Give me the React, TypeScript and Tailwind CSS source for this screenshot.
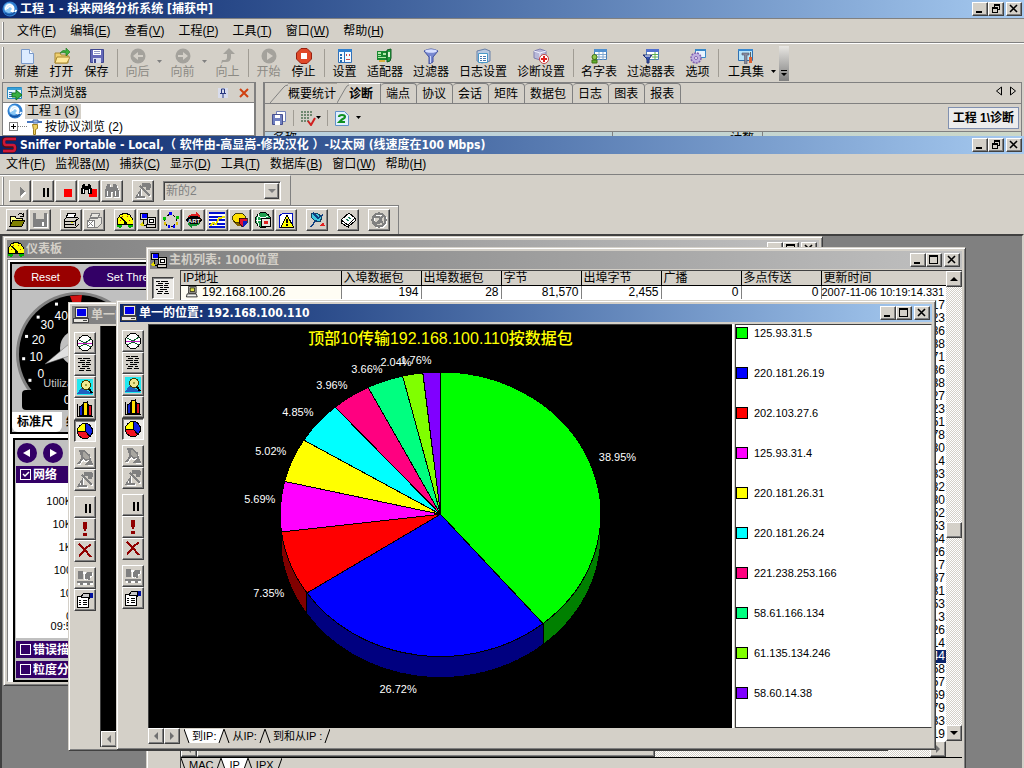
import React from "react";

const RAISED =
  "border border-t-white border-l-white border-r-[#404040] border-b-[#404040] shadow-[inset_-1px_-1px_0_#808080] bg-[#d4d0c8]";
const PRESSED =
  "border border-t-[#404040] border-l-[#404040] border-r-white border-b-white shadow-[inset_1px_1px_0_#808080] bg-[#eceae6]";
const DITHER = "bg-[repeating-conic-gradient(#ffffff_0_25%,#d4d0c8_0_50%)] bg-[length:2px_2px]";

const ICONS: Record<string, React.ReactNode> = {
  swirl: (
    <>
      <circle cx="8" cy="8" r="7.5" fill="#2f7fd0" />
      <circle cx="7" cy="7" r="5" fill="#8cc8f4" />
      <path d="M4 9a4 4 0 1 1 7 1M5.500 8a2.500 2.500 0 1 1 4 2q3 2 5-1" fill="none" stroke="#fff" strokeWidth="1.600" />
      <path d="M3 12q5 4 10-1" fill="none" stroke="#1450a0" strokeWidth="1.500" />
    </>
  ),
  newdoc: (
    <>
      <path d="M2.500 1.500h8l4 4v10h-12z" fill="#dcebff" stroke="#7898c8" />
      <path d="M10.500 1.500v4h4" fill="#fff" stroke="#7898c8" />
    </>
  ),
  opendoc: (
    <>
      <path d="M1 5h5l1 2h7v8H1z" fill="#f0d070" stroke="#a88830" />
      <path d="M3 9h13l-3 6H1z" fill="#ffe898" stroke="#a88830" />
      <path d="M6 5q3-4 6-2V0l4 4-4 4V5Q9 4 6 5z" fill="#3cb03c" stroke="#187018" strokeWidth=".6" />
    </>
  ),
  save: (
    <>
      <path d="M1.500 1.500h13v13h-13z" fill="#6468b8" stroke="#404890" />
      <path d="M4 2h8v5H4z" fill="#fff" />
      <path d="M5 3.500h6M5 5.500h6" stroke="#9098c8" />
      <path d="M4 10h8v5H4z" fill="#d8dcf0" />
      <path d="M5 11h2v4H5z" fill="#404890" />
    </>
  ),
  back: (
    <>
      <circle cx="8" cy="8" r="7.500" fill="#a4a29c" />
      <path d="M3 8l5-4v3h5v2H8v3z" fill="#d4d0c8" />
    </>
  ),
  forward: (
    <>
      <circle cx="8" cy="8" r="7.500" fill="#a4a29c" />
      <path d="M13 8L8 4v3H3v2h5v3z" fill="#d4d0c8" />
    </>
  ),
  up: <path d="M9 0l6 6h-4v3q0 5-5 5H3l-2 2 1-4h3q2 0 2-3V6H3z" fill="#a4a29c" />,
  play: (
    <>
      <circle cx="8" cy="8" r="7.500" fill="#a4a29c" />
      <path d="M6 4l6 4-6 4z" fill="#d4d0c8" />
    </>
  ),
  stop: (
    <>
      <path d="M5 .5h6l4.500 4.500v6L11 15.500H5L.5 11V5z" fill="#e04828" stroke="#982010" />
      <path d="M5 5h6v6H5z" fill="#fff" />
    </>
  ),
  settings: (
    <>
      <path d="M1.500 1.500h13v13h-13z" fill="#f4faff" stroke="#3070b8" />
      <path d="M1 1h14v3H1z" fill="#3080d0" />
      <path d="M3 6h2v2H3zM3 9h2v2H3zM3 12h2v2H3z" fill="#2068b0" />
      <path d="M7.500 4v11" stroke="#3070b8" />
      <path d="M9 6h1v2H9zM12 6h1v2h-1zM9 11h4v1H9z" fill="#d04848" />
    </>
  ),
  adapter: (
    <>
      <path d="M0 3h10v9H0z" fill="#188830" />
      <path d="M1 4h3v2H1zM1 7h3v1H1zM6 5h3v2H6zM1 9h8v1H1z" fill="#b0e8a8" />
      <path d="M10 2l4-1v9q0 4-4 4z" fill="#20a040" stroke="#105820" />
      <path d="M2 12h6v2H2z" fill="#d8b040" />
      <path d="M11 4h2v5h-2z" fill="#d8f0d0" />
    </>
  ),
  funnel: (
    <>
      <path d="M1 3q7-4 14 0L10 9v5l-4 2V9z" fill="#7888d0" stroke="#4050a0" />
      <ellipse cx="8" cy="3" rx="6" ry="1.800" fill="#d8e0ff" />
      <path d="M7.500 8v7" stroke="#d0d8f8" />
    </>
  ),
  logset: (
    <>
      <path d="M2 3l8-2 5 2v10l-8 2-5-2z" fill="#b8c8e0" stroke="#6880a8" />
      <path d="M3.500 5.500h9v9h-9z" fill="#fff" stroke="#4898c8" />
      <path d="M5 8.500h2M8 8.500h3M5 10.500h2M8 10.500h3M5 12.500h2M8 12.500h3" stroke="#4878b0" />
    </>
  ),
  diagset: (
    <>
      <path d="M1 3l6-2 6 2v7l-6 2-6-2z" fill="#b8b8d8" stroke="#8080b0" />
      <path d="M1 3l6 2 6-2M7 5v7" stroke="#f0f0ff" fill="none" />
      <circle cx="11" cy="11" r="4.500" fill="#fff" stroke="#c04040" />
      <path d="M11 8v6M8 11h6" stroke="#e02020" strokeWidth="2" />
    </>
  ),
  nametable: (
    <>
      <path d="M3.500 1.500h12v10h-12z" fill="#fff" stroke="#4880b8" />
      <path d="M3 1h13v3H3z" fill="#5090d0" />
      <path d="M4 6.500h11M4 9h11M8 4v8M12 4v8" stroke="#80a8d0" />
      <circle cx="3.500" cy="9" r="2.500" fill="#90c850" stroke="#407010" />
      <path d="M1 12h5v3H1z" fill="#60b030" stroke="#407010" />
    </>
  ),
  filtertable: (
    <>
      <path d="M3.500 1.500h12v10h-12z" fill="#fff" stroke="#4880b8" />
      <path d="M3 1h13v3H3z" fill="#5070d0" />
      <path d="M9 6.500h6M9 9h6M12 4v8" stroke="#60b050" />
      <path d="M0 7h9L6 11v4H4v-4z" fill="#3050b0" stroke="#203070" />
      <path d="M2 8h5" stroke="#fff" />
    </>
  ),
  options: (
    <>
      <path d="M5.500 1.500h10v8h-10z" fill="#e8f4ff" stroke="#3888c8" />
      <path d="M5 1h11v2H5z" fill="#3888c8" />
      <circle cx="6" cy="10" r="5" fill="#c0b0e0" stroke="#8060b0" strokeDasharray="2 1" strokeWidth="1.500" />
      <circle cx="6" cy="10" r="1.500" fill="#fff" stroke="#8060b0" />
    </>
  ),
  toolset: (
    <>
      <path d="M.5 1.500h14v11H.5z" fill="#b8e4fa" stroke="#3070b0" />
      <path d="M0 1h15v2H0z" fill="#3888d0" />
      <path d="M4 5h7v2H9v9H6.500V7H4z" fill="#888ca0" stroke="#505468" strokeWidth=".6" />
      <path d="M12 4h1v5h-1z" fill="#606060" />
      <path d="M11 9h3v6h-3z" fill="#e06030" />
    </>
  ),
  node: (
    <>
      <path d="M.5 2.500h14v11H.5z" fill="#e8f8ff" stroke="#2888c0" />
      <path d="M1 3h14v2H1z" fill="#38a0d8" />
      <path d="M2 7.500h3M2 9.500h3M2 11.500h3" stroke="#3070b0" />
      <path d="M5 8h4V5l6 5-6 5v-3H5z" fill="#38b040" stroke="#107020" />
    </>
  ),
  protocol: (
    <>
      <path d="M0 3h15" stroke="#4878c0" strokeWidth="2" />
      <path d="M6 1h5v3H6z" fill="#98b8e8" stroke="#4868a8" />
      <path d="M5.500 5.500h5v4l-2 1v5h-2v-5z" fill="#f0d060" stroke="#a08020" />
    </>
  ),
  savecopy: (
    <>
      <path d="M5.500 1.500h9v10h-9z" fill="#fff" stroke="#7080b8" />
      <path d="M1.500 4.500h10v10h-10z" fill="#7080c0" stroke="#485090" />
      <path d="M4 5h5v3H4zM4 11h5v4H4z" fill="#fff" />
    </>
  ),
  listcheck: (
    <>
      <path d="M1 2h12M1 5h12M1 8h8M1 11h8" stroke="#708870" strokeWidth="2" strokeDasharray="2 1" />
      <path d="M8 11l3 4 4-7" fill="none" stroke="#d02020" strokeWidth="2" />
    </>
  ),
  refresh: (
    <>
      <path d="M1.500 1.500h9l4 4v10h-13z" fill="#e0f0ff" stroke="#6090c8" />
      <path d="M5 7q0-2 3-2t3 2q0 1-3 2.500L5.500 12H11" fill="none" stroke="#109020" strokeWidth="2.200" />
    </>
  ),
  logoS: (
    <>
      <path d="M14 2H4Q1 2 1 5t3 4h7q2 0 2 2t-2 3H1" fill="none" stroke="#501018" strokeWidth="4" />
      <path d="M14 2H4Q2 2 2 5t2 3h7q2 0 2 3t-2 3H1" fill="none" stroke="#d01838" strokeWidth="2.500" />
    </>
  ),
  sPlay: (
    <>
      <path d="M9 5l5 5-5 5z" fill="#fff" />
      <path d="M8 4l5 4.500L8 13z" fill="#808080" />
    </>
  ),
  sPause: <path d="M8 5h2v9H8zM12 5h2v9h-2z" fill="#000" />,
  sStop: <path d="M6 6h8v8H6z" fill="#f00" />,
  sFind: (
    <>
      <path d="M8 6h8v8H8z" fill="#f00" />
      <path d="M3 0h2v2h3V0h2l2 5v5H8V6H5v4H1V5z" fill="#000" transform="translate(-1 1)" />
      <path d="M2 6h1v4H2zM8 6h1v4H8z" fill="#fff" />
    </>
  ),
  sFindGrey: (
    <>
      <path d="M4 2h3v3h3V2h3l3 7v6h-6v-5H8v5H2V9z" fill="#fff" />
      <path d="M3 1h3v3h3V1h3l3 7v6H9V9H7v5H1V8z" fill="#808080" />
      <path d="M3 8h1v5H3zM11 8h1v5h-1z" fill="#fff" />
    </>
  ),
  wand: (
    <>
      <path d="M6 4l10 10M6 15V9l-3 5M2 15h9" stroke="#fff" strokeWidth="2" fill="none" />
      <path d="M5 3l10 10" stroke="#808080" strokeWidth="2.500" />
      <path d="M5 14V8l-4 6h9M8 1h2v2H8zM12 0h2v2h-2zM12 4h2v2h-2zM15 2h1v2h-1z" stroke="#808080" strokeWidth="1.200" fill="none" />
    </>
  ),
  folder: (
    <>
      <path d="M1 4h5l1 2h6v2h3l-3 6H1z" fill="#ffff90" stroke="#000" />
      <path d="M1 14l3-6h12l-3 6z" fill="#808000" stroke="#000" />
      <path d="M9 3q3-3 5 0m0-2v3h-3" fill="none" stroke="#000" />
    </>
  ),
  disk: (
    <>
      <path d="M2 2h14v14H2z" fill="#fff" />
      <path d="M1 1h14v14H1z" fill="#808080" />
      <path d="M4 1h8v6H4z" fill="#d4d0c8" />
      <path d="M10 10h2v4h-2z" fill="#fff" />
    </>
  ),
  printer: (
    <>
      <path d="M5 1h8l-2 5H3z" fill="#fff" stroke="#000" />
      <path d="M1 8l3-3h10l2 2v5l-3 3H1z" fill="#d4d0c8" stroke="#000" />
      <path d="M1 9h11l3-2M12 9v5M2 12h9" fill="none" stroke="#000" />
      <path d="M8 10h2v1H8z" fill="#e8e800" />
    </>
  ),
  printerGrey: (
    <>
      <path d="M6 1h8l-2 5H4zM3 8l3-3h9v7l-3 3H3z" fill="#e8e6e0" stroke="#808080" />
      <path d="M1 8h7v7H1z" fill="#fff" stroke="#808080" />
      <path d="M2 9l5 5M7 9l-5 5" stroke="#808080" />
    </>
  ),
  gauge: (
    <>
      <path d="M0 12V8l3-5 5-2 5 2 3 5v4z" fill="#ff0" stroke="#000" />
      <path d="M3 8h1v1H3zM5 4h1v1H5zM10 4h1v1h-1zM12 8h1v1h-1z" fill="#c02020" />
      <path d="M4 5l5 6" stroke="#000" strokeWidth="1.500" />
      <path d="M7 10h3v2H7z" fill="#000" />
      <path d="M0 14h5M3 12.500v3M11 14h5M13 12.500v3" stroke="#00b000" strokeWidth="1.500" />
    </>
  ),
  hosts: (
    <>
      <path d="M.5 1.500h7v6h-7z" fill="#d4d0c8" stroke="#000" />
      <path d="M2 2h5v4H2z" fill="#00f" />
      <path d="M3.500 8v5h4" fill="none" stroke="#000" />
      <path d="M7.500 5.500h8v7h-8z" fill="#e8e6e0" stroke="#000" />
      <path d="M9.500 7.500h4v3h-4z" fill="#fff" stroke="#000" />
      <path d="M6.500 12.500h9v3h-9z" fill="#d4d0c8" stroke="#000" />
      <path d="M0 12l3-2 1 4H1z" fill="#e0d800" />
    </>
  ),
  matrix: (
    <>
      <path d="M7.500 1.500l6 4 .5 5-4 4H5l-3.500-4 .5-5z" fill="none" stroke="#000" strokeDasharray="2 1" />
      <path d="M6 0h3v3H6zM5 13h2v3H5zM10 13h2v3h-2z" fill="#00f" />
      <path d="M0 5h3v3H0zM13 4h3v3h-3z" fill="#00c000" />
      <path d="M1 10h2v3H1zM13 10h2v3h-2z" fill="#e0c000" />
    </>
  ),
  art: (
    <>
      <path d="M1 8Q2 1 10 2V0l5 4-5 4V5Q4 4 3 9z" fill="#e02020" />
      <path d="M15 8q-1 7-9 6v2l-5-4 5-4v3q6 1 7-4z" fill="#109030" />
      <ellipse cx="8" cy="8" rx="8" ry="4" fill="#000" />
      <text x="8" y="10.500" fontSize="6" fontWeight="700" textAnchor="middle" fill="#fff">ART</text>
    </>
  ),
  history: (
    <>
      <path d="M0 0h16v16H0z" fill="#fff" />
      <path d="M0 0h16v2H0zM0 4h16v2H0zM0 7h16v2H0zM0 11h16v2H0zM0 14h16v2H0z" fill="#0010d0" />
      <path d="M1 14l3-3 3 1 3-6 6-1" fill="none" stroke="#e8e000" strokeWidth="2" />
    </>
  ),
  piehist: (
    <>
      <path d="M1 5v4q3 6 9 5l2-4z" fill="#806000" />
      <ellipse cx="7" cy="6" rx="7" ry="5" fill="#ffe000" stroke="#000" strokeWidth=".7" />
      <path d="M7 6h8v5l-5 4-3-5z" fill="#e01030" stroke="#000" strokeWidth=".7" />
      <path d="M11 9h4v3l-4 3z" fill="#1020c0" />
    </>
  ),
  globe: (
    <>
      <circle cx="8" cy="8" r="7.500" fill="#20a050" stroke="#000" />
      <path d="M1 8h14M3 4q5 3 10 0M4 2q-3 6 0 12" stroke="#fff" fill="none" />
      <path d="M6.500 6.500h9v8h-9z" fill="#e8e6e0" stroke="#000" />
      <path d="M9 9h4v3H9z" fill="#e02020" />
    </>
  ),
  alarm: (
    <>
      <path d="M1 4l5-3h8v14H1z" fill="#fff" stroke="#0010c0" />
      <path d="M9 3l6.500 12H3z" fill="#ff0" stroke="#000" />
      <path d="M8 7h2v4H8zM8 12h2v2H8z" fill="#000" />
    </>
  ),
  capture: (
    <>
      <path d="M2 2l6-1 5 4-2 5-5-1-4-4z" fill="#40c8e0" stroke="#104060" />
      <path d="M7 8l-5 7M4 1l5 5 5-3" stroke="#104080" strokeWidth="1.500" fill="none" />
      <path d="M10 14h6l-2-4z" fill="#e02020" />
    </>
  ),
  book: (
    <>
      <path d="M1 8l8-7 6 5v3l-7 6-7-4z" fill="#fff" stroke="#000" />
      <path d="M1 8l7 5 7-7M8 13v3" fill="none" stroke="#000" />
      <path d="M6 7l3 2M8 5l3 2" stroke="#208060" />
    </>
  ),
  deny: (
    <>
      <circle cx="9" cy="9" r="6.500" fill="none" stroke="#fff" strokeWidth="2" />
      <circle cx="8" cy="8" r="6.500" fill="none" stroke="#808080" strokeWidth="2.500" />
      <path d="M3 5h5l2 3-2 3H4l-1-2M12 4l-8 9M8 8l4 3" stroke="#808080" strokeWidth="2" fill="none" />
    </>
  ),
  pc: (
    <>
      <path d="M2.500 .5h12v10h-12z" fill="#e8e6e0" stroke="#404040" />
      <path d="M4 2h9v7H4z" fill="#0000e8" />
      <path d="M.5 11.500h15v4H.5z" fill="#e8e6e0" stroke="#404040" />
      <path d="M10 13.500h4" stroke="#404040" />
    </>
  ),
  pcsmall: (
    <>
      <path d="M3.500 .5h10v9h-10z" fill="#d4d0c8" stroke="#000" />
      <path d="M5.500 2.500h6v5h-6z" fill="#e0e040" stroke="#000" />
      <path d="M1.500 10.500h12l1.500 4H.5z" fill="#f4f4f0" stroke="#000" />
    </>
  ),
  ball: (
    <>
      <circle cx="8" cy="8" r="7.500" fill="#fff" stroke="#000" />
      <path d="M1 8.500h14" stroke="#c020c0" />
      <path d="M2 5l6 3 6-4M2 12l6-3 6 3" stroke="#106030" fill="none" />
    </>
  ),
  lines: (
    <path
      d="M1 1.500h4M6 1.500h7M3 3.500h5M10 3.500h4M1 5.500h7M9 5.500h4M5 7.500h3M9 7.500h5M1 9.500h2M5 9.500h7M3 11.500h5M10 11.500h3M2 13.500h5M9 13.500h5"
      stroke="#000"
    />
  ),
  zoomer: (
    <>
      <path d="M0 0h16v16H0z" fill="#20e8f0" />
      <path d="M0 15l5-7 11 7z" fill="#2060c0" />
      <circle cx="9" cy="6" r="4.500" fill="#f0e890" stroke="#404000" />
      <path d="M12 10l3 4" stroke="#000" strokeWidth="2" />
      <circle cx="9" cy="6" r="1.500" fill="#a0a040" />
    </>
  ),
  bars: (
    <>
      <path d="M2.500 14V6l3-2v10z" fill="#1020d0" stroke="#000" />
      <path d="M6.500 14V2l4-1v13z" fill="#ffe000" stroke="#000" />
      <path d="M11.500 14V4l3 1v9z" fill="#e01020" stroke="#000" />
      <path d="M.5 3v12h15" fill="none" stroke="#000" />
    </>
  ),
  pie: (
    <>
      <circle cx="8" cy="8" r="7.500" fill="#ff0" stroke="#000" />
      <path d="M8 8V.5A7.500 7.500 0 0 1 13 13.500z" fill="#1020e0" stroke="#000" />
      <path d="M8 8l5 5.500A7.500 7.500 0 0 1 .5 9z" fill="#f01020" stroke="#000" />
    </>
  ),
  runner: (
    <>
      <path d="M4 3l5 1 4 4-2 4-5-2-4 5M11 15h5" stroke="#fff" strokeWidth="2" fill="none" />
      <path d="M3 1h4l5 4 1 4-4 1-4-3z" stroke="#808080" strokeWidth="1.500" fill="#a8a6a0" />
      <path d="M6 8l-5 6M10 14h5l-2-3zM5 2v5" stroke="#808080" strokeWidth="2" fill="#808080" />
    </>
  ),
  bang: <path d="M6 1h4v5L9 10H7L6 6zM6 12h4v3H6z" fill="#900000" />,
  cross: <path d="M2 1l5 5 7 8M14 2q-4 1-7 6-2 3-5 5" fill="none" stroke="#900000" strokeWidth="2" />,
  export: (
    <>
      <path d="M2 3h6v7M10 10l6-6M1 14h15" stroke="#fff" strokeWidth="2" fill="none" />
      <path d="M1 1h5v8H1zM8 9V4l3-2h4v4h-2v4zM0 11h16v2H0z" fill="#808080" />
      <path d="M3 14h3M10 14h3" stroke="#808080" strokeWidth="2" />
    </>
  ),
  props: (
    <>
      <path d="M.5 4.500h11v11H.5z" fill="#fff" stroke="#000" />
      <path d="M2 8.500h2M6 8.500h4M2 10.500h2M6 10.500h4M2 12.500h2M6 12.500h4" stroke="#000" />
      <path d="M4 5l3-4h5v5z" fill="#c8c8c8" stroke="#000" />
      <path d="M13 1h3v5h-3z" fill="#0010a0" />
    </>
  ),
};

function Icon({ name, className = "size-4", crisp = false }: { name: string; className?: string; crisp?: boolean }) {
  return (
    <svg viewBox="0 0 16 16" className={`${className} shrink-0`} aria-hidden="true" shapeRendering={crisp ? "crispEdges" : "auto"}>
      {ICONS[name]}
    </svg>
  );
}

function CaptionButtons({ restore = false }: { restore?: boolean }) {
  const base = `flex h-[14px] w-4 items-center justify-center ${RAISED}`;
  return (
    <div className="ml-auto flex shrink-0 pr-[2px]">
      <button className={base} aria-label="最小化">
        <svg viewBox="0 0 12 10" className="h-[10px] w-3"><path d="M2 7h6v2H2z" /></svg>
      </button>
      <button className={base} aria-label={restore ? "还原" : "最大化"}>
        <svg viewBox="0 0 12 10" className="h-[10px] w-3" shapeRendering="crispEdges">
          {restore ? (
            <path d="M4 0h6v6H8V5h1V2H5v1H4zM2 3h6v6H2zM3 5v3h4V5z" fillRule="evenodd" />
          ) : (
            <path d="M1 0h9v9H1zM2 2v6h7V2z" fillRule="evenodd" />
          )}
        </svg>
      </button>
      <button className={`ml-[2px] ${base}`} aria-label="关闭">
        <svg viewBox="0 0 12 10" className="h-[10px] w-3"><path d="M2 1l7 7M9 1L2 8" stroke="#000" strokeWidth="1.600" /></svg>
      </button>
    </div>
  );
}

function AppTitle({ icon, children }: { icon: string; children: React.ReactNode }) {
  return (
    <header className="flex h-[18px] shrink-0 items-center gap-[2px] bg-linear-to-r from-[#0a246a] to-[#a6caf0] pl-[2px]">
      <Icon name={icon} />
      <h1 className="truncate font-[DejaVu_Sans_Condensed,Noto_Sans_CJK_SC,sans-serif] text-[12px] leading-[18px] font-bold text-white">
        {children}
      </h1>
      <CaptionButtons restore />
    </header>
  );
}

function Menu({ items, className }: { items: [string, string][]; className: string }) {
  return (
    <nav className={className}>
      {items.map(([label, key]) => (
        <button key={key} className="whitespace-nowrap">
          {label}(<u>{key}</u>)
        </button>
      ))}
    </nav>
  );
}

type Tool = { t: string; icon: string; w: string; off?: boolean; drop?: boolean } | null;
const MAIN_TOOLS: Tool[] = [
  { t: "新建", icon: "newdoc", w: "w-[35px]" },
  { t: "打开", icon: "opendoc", w: "w-[35px]" },
  { t: "保存", icon: "save", w: "w-[35px]" },
  null,
  { t: "向后", icon: "back", w: "w-[35px]", off: true, drop: true },
  { t: "向前", icon: "forward", w: "w-[35px]", off: true, drop: true },
  { t: "向上", icon: "up", w: "w-[35px]", off: true },
  null,
  { t: "开始", icon: "play", w: "w-[35px]", off: true },
  { t: "停止", icon: "stop", w: "w-[35px]" },
  null,
  { t: "设置", icon: "settings", w: "w-[35px]" },
  { t: "适配器", icon: "adapter", w: "w-[46px]" },
  { t: "过滤器", icon: "funnel", w: "w-[46px]" },
  { t: "日志设置", icon: "logset", w: "w-[58px]" },
  { t: "诊断设置", icon: "diagset", w: "w-[58px]" },
  null,
  { t: "名字表", icon: "nametable", w: "w-[46px]" },
  { t: "过滤器表", icon: "filtertable", w: "w-[58px]" },
  { t: "选项", icon: "options", w: "w-[35px]" },
  null,
  { t: "工具集", icon: "toolset", w: "w-[50px]", drop: true },
];

function Caret({ grey = false }: { grey?: boolean }) {
  return (
    <svg viewBox="0 0 5 3" className="h-[3px] w-[5px] shrink-0" aria-hidden="true">
      <path d="M0 0h5L2.500 3z" fill={grey ? "#808080" : "#000"} />
    </svg>
  );
}

function Grip({ className }: { className: string }) {
  return <span className={`w-[2px] shrink-0 border-r border-l border-r-[#808080] border-l-white ${className}`} />;
}

function AnalyzerApp() {
  const tabs = ["端点", "协议", "会话", "矩阵", "数据包", "日志", "图表", "报表"];
  return (
    <section className="flex h-[136px] shrink-0 flex-col overflow-hidden">
      <AppTitle icon="swirl">工程 1 - 科来网络分析系统 [捕获中]</AppTitle>
      <div className="flex h-[25px] shrink-0 items-center border-t border-b border-t-[#808080] border-b-[#808080] pl-[2px]">
        <Grip className="h-[18px]" />
        <Menu
          className="flex gap-[14px] pl-[13px]"
          items={[["文件", "F"], ["编辑", "E"], ["查看", "V"], ["工程", "P"], ["工具", "T"], ["窗口", "W"], ["帮助", "H"]]}
        />
      </div>
      <div className="flex h-[39px] shrink-0 items-center border-t border-t-white pl-[2px]">
        <Grip className="mr-[5px] h-8" />
        {MAIN_TOOLS.map((tool, i) =>
          tool === null ? (
            <span key={i} className="flex w-[6px] justify-center"><span className="h-7 w-px bg-[#a09c94]" /></span>
          ) : (
            <div key={i} className="flex shrink-0 items-center">
              <button disabled={tool.off} className={`flex flex-col items-center gap-[1px] whitespace-nowrap disabled:text-[#8c8a84] ${tool.w}`}>
                <Icon name={tool.icon} />
                <span className="leading-[14px]">{tool.t}</span>
              </button>
              {tool.drop && (
                <button aria-label={`${tool.t}选项`} disabled={tool.off} className={tool.off ? "flex w-[10px] pb-1 pl-[2px]" : "flex w-2 pt-4"}>
                  <Caret grey={tool.off} />
                </button>
              )}
            </div>
          ),
        )}
        <button aria-label="更多按钮" className="flex h-[35px] w-[10px] items-end justify-center bg-linear-to-b from-[#e8e6e2] to-[#808080] pb-1">
          <svg viewBox="0 0 6 7" className="h-[7px] w-[6px]"><path d="M0 0h6v1H0zM0 3h6L3 6z" /></svg>
        </button>
      </div>
      <div className="flex min-h-0 flex-1">
        <aside className="ml-[2px] flex w-[254px] shrink-0 flex-col border border-r-2 border-[#808080]">
          <div className="flex h-[20px] shrink-0 items-center gap-1 border-b border-[#808080] pr-[5px] pl-1">
            <Icon name="node" />
            <h2 className="flex-1">节点浏览器</h2>
            <button aria-label="固定" className="mr-[7px] bg-[#d8dcec]">
              <svg viewBox="0 0 10 10" className="size-[10px]"><path d="M2 5.500h6M3.500 5V1h3v4M5 6v4" stroke="#283880" fill="none" /></svg>
            </button>
            <button aria-label="关闭面板">
              <svg viewBox="0 0 10 10" className="size-[10px]"><path d="M1 1l8 8M9 1L1 9" stroke="#d04010" strokeWidth="2" /></svg>
            </button>
          </div>
          <div className="flex flex-1 flex-col bg-white pl-1">
            <div className="flex h-4 shrink-0 items-center gap-[2px]">
              <Icon name="swirl" />
              <span className="bg-[#d4d0c8] px-[2px] leading-[15px]">工程 1 (3)</span>
            </div>
            <div className="flex h-4 shrink-0 items-center">
              <svg viewBox="0 0 18 10" className="ml-[2px] h-[10px] w-[18px]" shapeRendering="crispEdges">
                <path d="M.5.500h8v8h-8z" fill="#fff" stroke="#808080" />
                <path d="M2 4.500h5M4.500 2v5" stroke="#000" />
                <path d="M9 4.500h9" stroke="#808080" strokeDasharray="1 1" />
              </svg>
              <Icon name="protocol" />
              <span className="pl-[2px]">按协议浏览 (2)</span>
            </div>
          </div>
        </aside>
        <div className="mr-[2px] ml-[7px] flex min-w-0 flex-1 flex-col border-t border-r border-l-2 border-[#808080]">
          <div className="flex h-[21px] shrink-0 items-stretch border-b border-[#808080]">
            <svg viewBox="0 0 18 20" className="ml-[5px] h-5 w-[18px]"><path d="M0 20L13 5q2-3 5-3" stroke="#808080" fill="none" /></svg>
            <button className="border-t border-[#a8a49c] pr-[1px]">概要统计</button>
            <svg viewBox="0 0 12 20" className="h-5 w-3"><path d="M0 20L8 6q2-4 4-4" stroke="#808080" fill="none" /></svg>
            <button className="border-t border-r border-[#808080] border-t-white pr-[7px] font-bold">诊断</button>
            {tabs.map((t) => (
              <button key={t} className="rounded-t-[4px] border-t border-r border-[#808080] pr-[6px] pl-[5px]">{t}</button>
            ))}
            <div className="ml-auto flex items-center gap-2 pr-[5px] pb-1">
              <button aria-label="向左滚动"><svg viewBox="0 0 6 10" className="h-[10px] w-[6px]"><path d="M5.500 1v8l-5-4z" fill="none" stroke="#000" /></svg></button>
              <button aria-label="向右滚动"><svg viewBox="0 0 6 10" className="h-[10px] w-[6px]"><path d="M.5 1v8l5-4z" fill="none" stroke="#000" /></svg></button>
            </div>
          </div>
          <div className="flex h-[27px] shrink-0 items-center pl-[6px]">
            <button aria-label="保存结果"><Icon name="savecopy" /></button>
            <span className="mx-[6px] h-4 w-px bg-[#a09c94]" />
            <button aria-label="筛选" className="flex items-center"><Icon name="listcheck" /><Caret /></button>
            <span className="mx-[6px] h-4 w-px bg-[#a09c94]" />
            <button aria-label="刷新" className="flex items-center gap-[6px]"><Icon name="refresh" /><Caret /></button>
            <strong className="mr-[2px] ml-auto border border-[#8090b0] bg-[#ececec] px-1 leading-5">工程 1\诊断</strong>
          </div>
          <div className="flex h-[6px] overflow-hidden border-t border-[#808080] bg-linear-to-r from-[#b8d0e0] to-[#ccd8c8] leading-[12px]">
            <span className="w-[348px] border-r border-[#808080] pl-2">名称</span>
            <span className="w-[150px] border-r border-[#808080] pr-2 text-right">计数</span>
          </div>
        </div>
      </div>
    </section>
  );
}

function ToolButton({ icon, label, pressed = false, disabled = false }: { icon: string; label: string; pressed?: boolean; disabled?: boolean }) {
  return (
    <button
      aria-label={label}
      aria-pressed={pressed}
      disabled={disabled}
      className={`flex size-[22px] shrink-0 items-center justify-center ${pressed ? PRESSED : RAISED}`}
    >
      <Icon name={icon} crisp />
    </button>
  );
}

const FILE_TOOLS: [string, string][][] = [
  [["folder", "打开"], ["disk", "保存"]],
  [["printer", "打印"], ["printerGrey", "取消打印"]],
  [["gauge", "仪表板"], ["hosts", "主机列表"], ["matrix", "矩阵"], ["art", "响应时间"], ["history", "历史"], ["piehist", "协议分布"], ["globe", "全局统计"], ["alarm", "警报"]],
  [["capture", "捕获面板"]],
  [["book", "地址簿"]],
  [["deny", "停止"]],
];

const SIDE_TOOLS: [string, string][][] = [
  [["ball", "流量图"], ["lines", "大纲"], ["zoomer", "详细"], ["bars", "柱形图"], ["pie", "饼图"]],
  [["runner", "捕获"], ["wand", "定义过滤器"]],
  [["sPause", "暂停"], ["bang", "刷新"], ["cross", "重置"]],
  [["export", "导出"], ["props", "属性"]],
];

function Win({ title, icon, active = false, place, children }: { title: string; icon: string; active?: boolean; place: string; children: React.ReactNode }) {
  return (
    <article
      className={`absolute flex flex-col border border-[#d4d0c8] border-r-[#404040] border-b-[#404040] bg-[#d4d0c8] p-[3px] shadow-[inset_1px_1px_0_#fff,inset_-1px_-1px_0_#808080] ${place}`}
    >
      <header
        className={`flex h-[18px] shrink-0 items-center gap-[2px] bg-linear-to-r pl-[1px] ${
          active ? "from-[#0a246a] to-[#a6caf0] text-white" : "from-[#808080] to-[#c0c0c0] text-[#d4d0c8]"
        }`}
      >
        <Icon name={icon} crisp />
        <h2 className="truncate font-[DejaVu_Sans_Condensed,Noto_Sans_CJK_SC,sans-serif] text-[12px] leading-[18px] font-bold">{title}</h2>
        <CaptionButtons />
      </header>
      {children}
    </article>
  );
}

function Dial() {
  const cx = 66;
  const cy = 64;
  const ticks = [0, 10, 20, 30, 40, 50, 60, 70, 80, 90, 100];
  return (
    <svg viewBox="0 0 132 122" className="h-[122px] w-[132px] shrink-0 font-[Liberation_Sans,sans-serif]">
      <circle cx={cx} cy={cy} r="62" fill="#808080" />
      <circle cx={cx} cy={cy} r="59" fill="#000" />
      <path d="M0 102h132v20H0z" fill="#c0c0c0" />
      {ticks.map((t) => {
        const a = ((-118 + t * 2.36) * Math.PI) / 180;
        const x = cx + Math.sin(a) * 55;
        const y = cy - Math.cos(a) * 55;
        return (
          <g key={t}>
            <rect x={x - 1} y={y - 1} width="3" height="3" fill="#fff" />
            <text x={cx + Math.sin(a) * 42} y={cy - Math.cos(a) * 42 + 4} fontSize="12" textAnchor="middle" fill="#fff">{t}</text>
          </g>
        );
      })}
      <path d="M58 6l12-1-1 8-8 1z" fill="#d01010" />
      <circle cx={cx} cy={cy - 6} r="18" fill="#c0c0c0" />
      <path d="M33 74l24-20 6 10z" fill="#e0e0e0" stroke="#606060" strokeWidth=".5" />
      <text x="60" y="97" fontSize="11" textAnchor="middle" fill="#c8c8c8">Utilization%</text>
      <rect x="10" y="100" width="112" height="20" rx="4" fill="#000" />
      <text x="55" y="114" fontSize="12" textAnchor="middle" fill="#fff">0</text>
    </svg>
  );
}

function Check({ label, checked = false }: { label: string; checked?: boolean }) {
  return (
    <label className="flex h-[17px] shrink-0 items-center gap-[2px] bg-[#330066] pl-1 text-[12px] font-bold text-white">
      <span className="relative flex size-[11px] shrink-0">
        <input type="checkbox" defaultChecked={checked} className="size-[11px] appearance-none border border-white" />
        {checked && (
          <svg viewBox="0 0 11 11" className="pointer-events-none absolute inset-0 size-[11px]"><path d="M3 5l2 2 4-4" fill="none" stroke="#fff" strokeWidth="1.500" /></svg>
        )}
      </span>
      {label}
    </label>
  );
}

function Dashboard() {
  return (
    <Win title="仪表板" icon="gauge" place="top-0 left-[1px] h-[450px] w-[820px]">
      <div className="mt-[1px] flex min-h-0 flex-1 flex-col gap-1 border border-[#808080] border-r-white border-b-white bg-white p-[2px]">
        <div className="flex flex-col border-2 border-black bg-[#c0c0c0]">
          <div className="flex h-[26px] shrink-0 items-center gap-[2px] border-b border-black pl-[2px] text-[11px] text-white">
            <button className="h-[21px] w-[67px] rounded-full bg-[#990000] pr-1">Reset</button>
            <button className="h-[21px] w-[130px] rounded-full bg-[#330066]">Set Thresholds...</button>
          </div>
          <Dial />
          <div className="flex h-5 shrink-0 items-stretch">
            <button className="w-[50px] rounded-b-[6px] bg-white pr-1 font-bold">标准尺</button>
            <button className="px-1 font-bold">细节</button>
          </div>
        </div>
        <div className="ml-[3px] flex flex-1 flex-col border-2 border-black bg-[#c0c0c0] pl-[1px]">
          <div className="flex h-[26px] shrink-0 items-center gap-[6px] pl-[1px]">
            <button aria-label="上一个" className="flex size-5 items-center justify-center rounded-full bg-[#330066]">
              <svg viewBox="0 0 8 8" className="size-2"><path d="M7 0v8L0 4z" fill="#fff" /></svg>
            </button>
            <button aria-label="下一个" className="flex size-5 items-center justify-center rounded-full bg-[#330066]">
              <svg viewBox="0 0 8 8" className="size-2"><path d="M1 0v8l7-4z" fill="#fff" /></svg>
            </button>
          </div>
          <Check label="网络" checked />
          <div className="flex flex-1 flex-col bg-white pt-[7px]">
            <ul className="w-14 text-right text-[11px] leading-[23px]">
              {["100K", "10K", "1K", "100", "10", "0"].map((v) => <li key={v}>{v}</li>)}
              <li className="-mt-[13px]">09:5</li>
            </ul>
          </div>
          <div className="flex flex-col gap-[3px] pt-[3px] pb-[2px]">
            <Check label="错误描述" />
            <Check label="粒度分布" />
          </div>
        </div>
      </div>
    </Win>
  );
}

const HOST_HEAD = ["入埠数据包", "出埠数据包", "字节", "出埠字节", "广播", "多点传送"];
const ROW_ENDS = [
  "317", "323", "336", "338", "371", "336", "338", "327", "323", "351", "378", "330", "1.4", "333", "332", "330", "352",
  "353", "354", "326", "3.7", "337", "331", "353", "5.3", "326", "314", "344", "358", "357", "369", "379", "333", "319",
];

function ScrollButton({ dir }: { dir: "up" | "down" | "left" | "right" }) {
  const paths = { up: "M0 6l4-4 4 4z", down: "M0 2l4 4 4-4z", left: "M6 0v8L2 4z", right: "M2 0v8l4-4z" };
  return (
    <button aria-label={`scroll ${dir}`} className={`flex size-4 shrink-0 items-center justify-center ${RAISED}`}>
      <svg viewBox="0 0 8 8" className="size-2">
        <path d={paths[dir]} fill={dir === "left" || dir === "right" ? "#707070" : "#000"} />
      </svg>
    </button>
  );
}

function SheetTabs({ items, active }: { items: string[]; active: number }) {
  return (
    <div className="flex h-[14px] text-[11px]">
      {items.map((t, i) => (
        <button key={t} className="flex items-stretch">
          <svg viewBox="0 0 7 14" className="h-[14px] w-[7px]">
            <path d="M0 0h7v14H5z" fill={i === active ? "#fff" : "#d4d0c8"} />
            <path d="M0 0l5 14" stroke="#000" fill="none" />
          </svg>
          <span className={`px-[1px] leading-[14px] ${i === active ? "bg-white" : ""}`}>{t}</span>
          <svg viewBox="0 0 7 14" className="h-[14px] w-[7px]">
            <path d="M0 0h7L2 14H0z" fill={i === active ? "#fff" : "#d4d0c8"} />
            <path d="M7 0L2 14" stroke="#000" fill="none" />
          </svg>
        </button>
      ))}
    </div>
  );
}

function HostTable() {
  const th = "h-[14px] truncate border-r border-b border-black bg-[#d4d0c8] pl-[2px] text-left font-normal";
  const td = "truncate border-r border-[#808080] pr-[2px] text-right";
  return (
    <Win title="主机列表: 1000位置" icon="hosts" place="top-[11px] left-[144px] h-[540px] w-[820px]">
      <div className="mt-[1px] flex min-h-0 flex-1">
        <div className="w-[30px] shrink-0 pt-[7px] pl-[2px]"><ToolButton icon="lines" label="大纲" pressed /></div>
        <div className="flex min-w-0 flex-1 flex-col border-t border-l border-[#404040]">
          <div className="flex h-[470px] shrink-0">
            <div className="min-w-0 flex-1 overflow-hidden bg-white">
              <table className="w-full table-fixed border-collapse leading-[12px]">
                <colgroup>
                  <col className="w-[160px]" />
                  {HOST_HEAD.map((h) => <col key={h} className="w-[80px]" />)}
                  <col />
                </colgroup>
                <thead className="leading-[14px]">
                  <tr>
                    <th className={th}>IP地址</th>
                    {HOST_HEAD.map((h) => <th key={h} className={th}>{h}</th>)}
                    <th className="truncate border-b border-black bg-[#d4d0c8] pl-[2px] text-left font-normal">更新时间</th>
                  </tr>
                </thead>
                <tbody>
                  <tr className="h-[13px]">
                    <td className="border-r border-[#808080] bg-[#fffdf4]">
                      <span className="flex h-3 items-center gap-[2px] pl-[3px]"><Icon name="pcsmall" className="h-3 w-4" />192.168.100.26</span>
                    </td>
                    {["194", "28", "81,570", "2,455", "0", "0"].map((v, i) => <td key={i} className={td}>{v}</td>)}
                    <td className="pr-[2px] text-right text-[11px] whitespace-nowrap">2007-11-06 10:19:14.331</td>
                  </tr>
                  {ROW_ENDS.map((v, i) => (
                    <tr key={i} className={i === 27 ? "h-[13px] bg-[#0a246a] text-white" : "h-[13px]"}>
                      <td colSpan={8} className="pr-[1px] text-right">{v}</td>
                    </tr>
                  ))}
                </tbody>
              </table>
            </div>
            <div className={`flex w-4 shrink-0 flex-col ${DITHER}`}>
              <ScrollButton dir="up" />
              <div className={`mt-[235px] h-4 ${RAISED}`} />
              <div className="mt-auto flex"><ScrollButton dir="down" /></div>
            </div>
          </div>
          <div className={`mr-4 flex h-4 shrink-0 ${DITHER}`}>
            <ScrollButton dir="left" />
            <div className={`w-[458px] ${RAISED}`} />
            <div className="ml-auto flex"><ScrollButton dir="right" /></div>
          </div>
          <div className="border-t border-black"><SheetTabs items={["MAC", "IP", "IPX"]} active={1} /></div>
        </div>
      </div>
    </Win>
  );
}

const SLICES = [
  { ip: "125.93.31.5", v: 38.95, c: "#00ff00", d: "#008000", x: 449, y: 108 },
  { ip: "220.181.26.19", v: 26.72, c: "#0000ff", d: "#000080", x: 230, y: 339 },
  { ip: "202.103.27.6", v: 7.35, c: "#ff0000", d: "#800000", x: 104, y: 244 },
  { ip: "125.93.31.4", v: 5.69, c: "#ff00ff", d: "#800080", x: 95, y: 150 },
  { ip: "220.181.26.31", v: 5.02, c: "#ffff00", d: "#808000", x: 106, y: 102 },
  { ip: "220.181.26.24", v: 4.85, c: "#00ffff", d: "#008080", x: 133, y: 63 },
  { ip: "221.238.253.166", v: 3.96, c: "#ff0080", d: "#800040", x: 167, y: 36 },
  { ip: "58.61.166.134", v: 3.66, c: "#00ff80", d: "#008040", x: 202, y: 20 },
  { ip: "61.135.134.246", v: 2.04, c: "#80ff00", d: "#408000", x: 231, y: 13 },
  { ip: "58.60.14.38", v: 1.76, c: "#8000ff", d: "#400080", x: 251, y: 11 },
];

function PieChart() {
  const CX = 291;
  const CY = 161;
  const RX = 160;
  const RY = 142;
  const DEPTH = 21;
  const at = (f: number, dy = 0) =>
    `${(CX + RX * Math.sin(f * 2 * Math.PI)).toFixed(2)} ${(CY - RY * Math.cos(f * 2 * Math.PI) + dy).toFixed(2)}`;
  let sum = 0;
  const arcs = SLICES.map((s) => {
    const from = sum;
    sum += s.v / 100;
    return { ...s, from, to: sum };
  });
  return (
    <svg viewBox="0 0 582 374" preserveAspectRatio="xMidYMin meet" className="min-h-0 w-full flex-1 font-[Liberation_Sans,sans-serif]">
      <g shapeRendering="crispEdges">
        {arcs.map((s) => {
          const a = Math.max(s.from, 0.25);
          const b = Math.min(s.to, 0.75);
          return a < b ? (
            <path
              key={s.ip}
              d={`M${at(a)}A${RX} ${RY} 0 0 1 ${at(b)}L${at(b, DEPTH)}A${RX} ${RY} 0 0 0 ${at(a, DEPTH)}Z`}
              fill={s.d}
              stroke="#000"
            />
          ) : null;
        })}
        {arcs.map((s) => (
          <path key={s.ip} d={`M${CX} ${CY}L${at(s.from)}A${RX} ${RY} 0 0 1 ${at(s.to)}Z`} fill={s.c} stroke="#000" />
        ))}
      </g>
      {arcs.map((s) => (
        <text key={s.ip} x={s.x} y={s.y} fontSize="11" fill="#fff">{s.v}%</text>
      ))}
    </svg>
  );
}

function SideTools() {
  return (
    <div className="flex w-7 shrink-0 flex-col gap-[5px] pt-[6px] pl-[2px]">
      {SIDE_TOOLS.map((group, i) => (
        <div key={i} className="flex flex-col">
          {group.map(([icon, label]) => (
            <ToolButton key={label} icon={icon} label={label} pressed={icon === "pie"} disabled={icon === "runner" || icon === "wand" || icon === "export"} />
          ))}
        </div>
      ))}
    </div>
  );
}

function StationWindow() {
  return (
    <Win title="单一的位置: 192.168.100.110" icon="pc" active place="top-[64px] left-[114px] h-[450px] w-[820px]">
      <div className="mt-[2px] flex min-h-0 flex-1">
        <SideTools />
        <div className="flex min-w-0 flex-1 flex-col">
          <div className="flex min-h-0 flex-1">
            <div className="flex min-w-0 flex-1 flex-col border-t border-l border-[#404040] bg-black">
              <h3 className="h-7 shrink-0 text-center font-[Liberation_Sans,Noto_Sans_CJK_SC,sans-serif] text-[16px] leading-7 font-medium text-[#ffff00]">
                顶部10传输192.168.100.110按数据包
              </h3>
              <PieChart />
            </div>
            <div className="w-1 shrink-0 border-r border-l-2 border-r-[#404040] border-l-white bg-[#d4d0c8]" />
            <ul className="flex w-[196px] shrink-0 flex-col gap-7 overflow-hidden border-t border-r border-b border-[#404040] border-r-[#d4d0c8] bg-white pt-[2px] text-[11px] leading-3">
              {SLICES.map((s) => (
                <li key={s.ip} className="flex h-3 items-center gap-[6px]">
                  <svg viewBox="0 0 12 12" className="size-3"><rect x=".5" y=".5" width="11" height="11" fill={s.c} stroke="#000" /></svg>
                  {s.ip}
                </li>
              ))}
            </ul>
          </div>
          <div className="flex h-[18px] shrink-0">
            <ScrollButton dir="left" />
            <ScrollButton dir="right" />
            <div className="pt-[1px] pl-1"><SheetTabs items={["到IP:", "从IP:", "到和从IP :"]} active={0} /></div>
          </div>
        </div>
      </div>
    </Win>
  );
}

function SnifferApp() {
  return (
    <section className="flex min-h-0 flex-1 flex-col">
      <AppTitle icon="logoS">Sniffer Portable - Local,（ 软件由-高显嵩-修改汉化 ）-以太网 (线速度在100 Mbps)</AppTitle>
      <Menu
        className="flex h-[21px] shrink-0 items-center gap-[10px] border-b border-[#808080] pl-[6px]"
        items={[["文件", "F"], ["监视器", "M"], ["捕获", "C"], ["显示", "D"], ["工具", "T"], ["数据库", "B"], ["窗口", "W"], ["帮助", "H"]]}
      />
      <div className="flex h-[30px] w-[291px] shrink-0 items-center border-t border-r border-t-white border-r-[#808080] pl-[2px]">
        <Grip className="h-7" />
        <div className="flex gap-px pl-[5px]">
          <ToolButton icon="sPlay" label="开始捕获" disabled />
          <ToolButton icon="sPause" label="暂停捕获" />
          <ToolButton icon="sStop" label="停止捕获" />
          <ToolButton icon="sFind" label="停止并显示" />
          <ToolButton icon="sFindGrey" label="显示" disabled />
        </div>
        <div className="pl-[9px]"><ToolButton icon="wand" label="定义过滤器" disabled /></div>
        <div className="relative ml-[9px] flex">
          <select aria-label="过滤器" disabled className="h-5 w-[118px] appearance-none border border-[#808080] border-r-white border-b-white bg-[#d4d0c8] pl-[2px] text-[12px] text-[#808080] opacity-100 shadow-[inset_1px_1px_0_#404040]">
            <option>新的2</option>
          </select>
          <span className={`pointer-events-none absolute top-[2px] right-[2px] flex h-4 w-[15px] items-center justify-center ${RAISED}`}>
            <svg viewBox="0 0 8 4" className="h-1 w-2"><path d="M0 0h8L4 4z" fill="#808080" /></svg>
          </span>
        </div>
      </div>
      <div className="flex h-[29px] w-[399px] shrink-0 items-center gap-[9px] border-t border-r border-[#808080] pl-[6px] shadow-[inset_0_1px_0_#fff]">
        {FILE_TOOLS.map((group, i) => (
          <div key={i} className="flex gap-px">
            {group.map(([icon, label]) => (
              <ToolButton key={label} icon={icon} label={label} disabled={icon === "printerGrey" || icon === "deny" || icon === "disk"} />
            ))}
          </div>
        ))}
      </div>
      <main className="relative min-h-0 flex-1 overflow-hidden border-t-2 border-r-2 border-l-2 border-[#404040] border-r-[#d4d0c8] bg-[#808080]">
        <Dashboard />
        <HostTable />
        <Win title="单一的位置: 192.168.100.110" icon="pc" place="top-[66px] left-[66px] h-[449px] w-[820px]">
          <div className="mt-[2px] flex min-h-0 flex-1">
            <SideTools />
            <div className="flex min-w-0 flex-1 flex-col border-l border-[#404040]">
              <div className="flex-1 bg-black" />
              <ScrollButton dir="left" />
            </div>
          </div>
        </Win>
        <StationWindow />
      </main>
    </section>
  );
}

export default function App() {
  return (
    <div className="flex h-screen flex-col overflow-hidden bg-[#d4d0c8] font-[Liberation_Sans,Noto_Sans_CJK_SC,sans-serif] text-[12px] leading-[16px] text-black">
      <AnalyzerApp />
      <SnifferApp />
    </div>
  );
}
